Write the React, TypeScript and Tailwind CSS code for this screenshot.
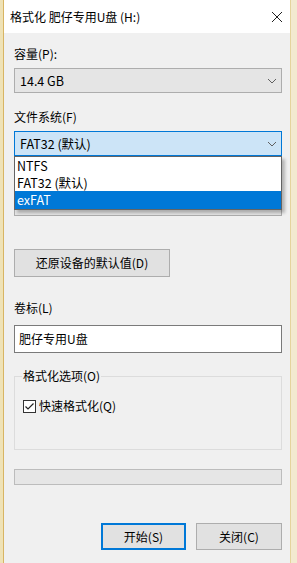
import React from 'react';

const font = { fontFamily: '"Noto Sans CJK SC", "Noto Sans", sans-serif' };

function Chevron() {
	return (
		<svg width="10" height="6" viewBox="0 0 10 6" className="shrink-0">
			<path d="M1 1 L5 5 L9 1" fill="none" stroke="#606060" strokeWidth="1" />
		</svg>
	);
}

export default function App() {
	return (
		<div className="flex h-[563px] w-[297px] overflow-hidden bg-[#f3ead0] text-[12px] leading-[14px] text-black" style={font}>
			{/* outside strip left */}
			<div className="w-[3px] bg-[#efe2b6]" />
			<div className="flex w-[287px] flex-col border-l border-[#d8b563] bg-[#f0f0f0]">
				{/* Title bar */}
				<div className="flex h-[33px] items-center justify-between bg-white pl-[6px] pr-[7px]">
					<span className="text-[12px]">格式化 肥仔专用U盘 (H:)</span>
					<svg width="12" height="12" viewBox="0 0 12 12">
						<path d="M1 1 L11 11 M11 1 L1 11" stroke="#222" strokeWidth="1" />
					</svg>
				</div>

				<div className="flex flex-col pl-[10px]">
					<div className="mt-[14px]">容量(P):</div>
					<div className="mt-[7px] flex h-[25px] w-[268px] items-center justify-between border border-[#adadad] bg-[#e5e5e5] pl-[5px] pr-[4px] text-[12.5px]">
						<span>14.4 GB</span>
						<Chevron />
					</div>

					<div className="mt-[17px]">文件系统(F)</div>
					<div className="relative mt-[7px]">
						<div className="flex h-[25px] w-[268px] items-center justify-between border border-[#0078d7] bg-[#cce4f7] pl-[5px] pr-[4px] text-[12.5px]">
							<span>FAT32 (默认)</span>
							<Chevron />
						</div>
						{/* dropdown list */}
						<div className="absolute left-0 top-[25px] z-10 flex w-[268px] flex-col border border-[#646464] bg-white text-[12.5px] leading-[14px] shadow-[3px_3px_3px_rgba(0,0,0,0.25)]">
							<div className="flex h-[17px] items-center pl-[2px]">NTFS</div>
							<div className="flex h-[17px] items-center pl-[2px]">FAT32 (默认)</div>
							<div className="flex h-[18px] items-center bg-[#0078d7] pl-[2px] text-white">exFAT</div>
						</div>
						{/* hidden allocation unit select */}
						<div className="mt-[10px] h-[14px]" />
						<div className="mt-[11px] h-[25px] w-[268px] border border-[#adadad] bg-[#e5e5e5]" />
					</div>

					<button className="mt-[33px] flex h-[28px] w-[156px] items-center justify-center border border-[#adadad] bg-[#e1e1e1] text-[12px]">
						还原设备的默认值(D)
					</button>

					<div className="mt-[24px]">卷标(L)</div>
					<div className="mt-[10px] flex h-[28px] w-[268px] items-center border border-[#7a7a7a] bg-white pl-[4px]">
						肥仔专用U盘
					</div>

					<div className="relative mt-[23px] h-[74px] w-[268px] border border-[#dcdcdc]">
						<span className="absolute left-[7px] top-[-8px] bg-[#f0f0f0] px-[1px]">格式化选项(O)</span>
						<div className="mt-[22px] flex items-center pl-[8px]">
							<svg width="13" height="13" viewBox="0 0 13 13" className="shrink-0">
								<rect x="0.5" y="0.5" width="12" height="12" fill="white" stroke="#333" />
								<path d="M2.5 6.5 L5 9 L10.5 3.5" fill="none" stroke="#222" strokeWidth="1.2" />
							</svg>
							<span className="ml-[3px]">快速格式化(Q)</span>
						</div>
					</div>

					<div className="mt-[19px] h-[16px] w-[268px] border border-[#bcbcbc] bg-[#e6e6e6]" />

					<div className="mt-[38px] flex w-[268px] justify-end gap-[10px]">
						<button className="flex h-[27px] w-[85px] items-center justify-center border-2 border-[#0078d7] bg-[#e1e1e1] text-[12px]">
							开始(S)
						</button>
						<button className="flex h-[27px] w-[86px] items-center justify-center border border-[#adadad] bg-[#e1e1e1] text-[12px]">
							关闭(C)
						</button>
					</div>
				</div>
			</div>
			<div className="flex-1 border-l border-[#e5d49c] bg-[#f3ead0]" />
		</div>
	);
}
